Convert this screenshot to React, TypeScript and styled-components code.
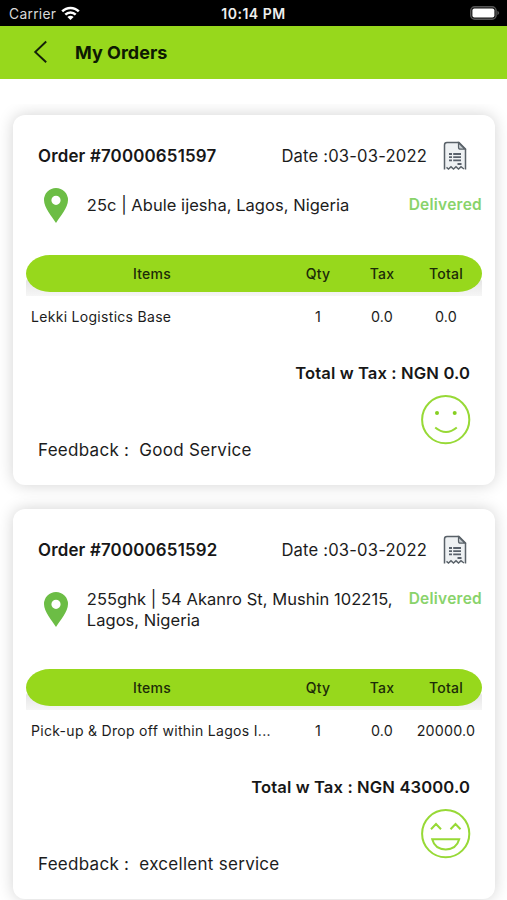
import React from "react";
import styled, { createGlobalStyle } from "styled-components";

const GlobalStyle = createGlobalStyle`
  * { box-sizing: border-box; }
  body {
    margin: 0;
    background: #fff;
    color: #1c1c1c;
    font-family: Inter, "Liberation Sans", sans-serif;
  }
`;

const Screen = styled.div`
  width: 507px;
  height: 900px;
  overflow: hidden;
  display: flex;
  flex-direction: column;
`;

const StatusBar = styled.div`
  height: 26px;
  flex: none;
  padding: 1px 7px 0 9px;
  background: #000;
  color: #d8d8d8;
  display: grid;
  grid-template-columns: 1fr auto 1fr;
  align-items: center;
  font-size: 13.8px;
  letter-spacing: 0.3px;
`;

const Carrier = styled.div`
  display: flex;
  align-items: center;
  gap: 5px;
`;

const Clock = styled.div`
  margin-right: 2px;
  color: #eee;
  font-size: 14px;
  font-weight: 600;
  letter-spacing: 0.5px;
`;

const BatterySlot = styled.div`
  display: flex;
  justify-content: flex-end;
`;

const NavBar = styled.header`
  height: 53px;
  flex: none;
  padding: 0 33px 2px;
  display: flex;
  align-items: center;
  gap: 26px;
  background: #97d81c;
`;

const Title = styled.h1`
  margin: 2px 0 0;
  color: #0d1a02;
  font-size: 18px;
  font-weight: 700;
`;

const OrderList = styled.main`
  margin-top: 25px;
  padding: 11px 12px 0 13px;
  flex: 1;
  overflow: hidden;
  display: flex;
  flex-direction: column;
  gap: 24px;
`;

const Card = styled.article`
  flex: none;
  padding: 25px 13px 29px 13px;
  border-radius: 12px;
  background: #fff;
  box-shadow: 0 0 16px rgba(0, 0, 0, 0.18);
`;

const CardHeader = styled.div`
  height: 31px;
  padding: 0 15px 0 12px;
  display: flex;
  align-items: center;
`;

const OrderNumber = styled.div`
  flex: 1;
  font-size: 16.9px;
  font-weight: 600;
  color: #171717;
  letter-spacing: 0.18px;
`;

const OrderDate = styled.div`
  margin-right: 16px;
  font-size: 16.6px;
  letter-spacing: 0.18px;
`;

const AddressRow = styled.div`
  margin-top: 16px;
  padding-left: 18px;
  display: flex;
  align-items: flex-start;
`;

const PinSlot = styled.div<{ $drop: number }>`
  width: 43px;
  height: 36px;
  padding-top: ${(p) => p.$drop}px;
`;

const Address = styled.div`
  width: 322px;
  padding-top: 8px;
  font-size: 16.5px;
  line-height: 20.5px;
  letter-spacing: 0.04px;
  white-space: pre-line;
`;

const Status = styled.div`
  padding: 8px 0 0 1px;
  color: #89d36b;
  font-size: 15.5px;
  line-height: 20px;
  font-weight: 600;
  letter-spacing: 0.25px;
`;

const TableHeadClip = styled.div<{ $gap: number }>`
  margin-top: ${(p) => p.$gap}px;
  height: 41px;
  overflow: hidden;
  background: linear-gradient(to bottom, #fff 24px, #e6e6e6 26px, #f6f6f6 41px);
`;

const Columns = styled.div`
  display: grid;
  grid-template-columns: 252px 80px 48px 80px;
  align-items: center;
  text-align: center;
  font-size: 14px;
  letter-spacing: 0.2px;
`;

const TableHead = styled(Columns)`
  height: 37px;
  border-radius: 24px / 18.5px;
  color: #1c2b08;
  background: #97d81c;
  font-weight: 500;
`;

const TableRow = styled(Columns)`
  height: 40px;
  padding-top: 1px;
  font-size: 14.3px;
`;

const ItemName = styled.div`
  padding-left: 5px;
  text-align: left;
  font-size: 14px;
  letter-spacing: 0.3px;
  white-space: nowrap;
`;

const GrandTotal = styled.div`
  margin-top: 26px;
  padding-right: 12px;
  text-align: right;
  color: #171717;
  font-size: 16.6px;
  line-height: 22px;
  font-weight: 600;
  letter-spacing: 0.12px;
`;

const FeedbackRow = styled.div`
  height: 61px;
  margin-top: 11px;
  padding: 0 11px 0 12px;
  display: flex;
  align-items: flex-start;
  justify-content: space-between;
`;

const Feedback = styled.div`
  padding-top: 44px;
  font-size: 17px;
  line-height: 22px;
  letter-spacing: 0.28px;
  white-space: pre;
`;

const WifiIcon = () => (
  <svg width="19" height="15" viewBox="0 0 19 15">
    <g fill="none" stroke="#fff" strokeWidth="2.5">
      <path d="M1.2 5.4C5.8.7 13.2.7 17.8 5.4" />
      <path d="M4.3 8.7C7.2 5.8 11.8 5.8 14.7 8.7" />
    </g>
    <path d="M6.4 10.9Q9.5 8.4 12.6 10.9L9.5 14Z" fill="#fff" />
  </svg>
);

const BatteryIcon = () => (
  <svg width="30" height="15" viewBox="0 0 30 15">
    <rect x="0.7" y="0.7" width="25.4" height="12.6" rx="4" fill="#111" stroke="#555" strokeWidth="1.4" />
    <rect x="2.4" y="2.4" width="22" height="9.2" rx="2" fill="#fff" />
    <path d="M27.4 4.8Q31 7 27.4 9.2Z" fill="#555" />
  </svg>
);

const BackIcon = () => (
  <svg width="16" height="24" viewBox="0 0 16 24">
    <path d="M13.2 1.5 2.2 12 13.2 22.3" fill="none" stroke="#14210a" strokeWidth="1.9" />
  </svg>
);

const ReceiptIcon = () => (
  <svg width="24" height="30" viewBox="0 0 24 30">
    <path
      d="M1.5 28V4Q1.5 1.5 4 1.5H16L22.5 8V28L20.5 26 18 28.2 15.5 26 13 28.2 10.5 26 8 28.2 5.5 26Z"
      fill="#eef1f3"
    />
    <path
      d="M1.5 28.6V4Q1.5 1.5 4 1.5H16L22.5 8V28.6M3.5 26.4 5.5 28 8 25.7 10.5 28 13 25.7 15.5 28 18 25.7 21 28"
      fill="none"
      stroke="#596168"
      strokeWidth="1.5"
    />
    <path d="M15.5 1.8V6.2Q15.5 8.2 17.5 8.2H22Z" fill="#c7cdd1" stroke="#596168" strokeWidth="1.2" />
    <path
      d="M6 13H9M10.2 13H18M6 16.2H9M10.2 16.2H18M6 19.4H9M10.2 19.4H18M14.5 23H18.5"
      stroke="#59616b"
      strokeWidth="1.8"
    />
  </svg>
);

const PinIcon = () => (
  <svg width="24" height="35" viewBox="0 0 24 35">
    <path
      fillRule="evenodd"
      d="M12 0A12 12 0 0 1 24 12C24 20 16 28.5 12 35 8 28.5 0 20 0 12A12 12 0 0 1 12 0ZM12 7.7A4.6 4.6 0 1 0 12 16.9 4.6 4.6 0 0 0 12 7.7Z"
      fill="#6cbd45"
    />
  </svg>
);

const SmileIcon = () => (
  <svg width="50" height="50" viewBox="0 0 50 50">
    <circle cx="24.7" cy="24.7" r="23.6" fill="none" stroke="#97d936" strokeWidth="2" />
    <circle cx="16" cy="18" r="2" fill="#86cf22" />
    <circle cx="33.7" cy="18" r="2" fill="#86cf22" />
    <path d="M14.2 32.5Q25 41.5 35.8 32.5" fill="none" stroke="#97d936" strokeWidth="2" />
  </svg>
);

const LaughIcon = () => (
  <svg width="50" height="50" viewBox="0 0 50 50">
    <g fill="none" stroke="#97d936" strokeWidth="2">
      <circle cx="24.7" cy="24.7" r="23.6" />
      <path d="M10 20.3 15 15 20 20.3M29.5 20.3 34.5 15 39.5 20.3" />
      <path d="M11.2 30.3H38.2C36.5 36.6 31.5 40.4 24.7 40.4S12.9 36.6 11.2 30.3Z" />
    </g>
  </svg>
);

interface Order {
  id: string;
  date: string;
  address: string;
  pinDrop: number;
  tableGap: number;
  item: string;
  total: string;
  grandTotal: string;
  feedback: string;
  mood: "smile" | "laugh";
}

const orders: Order[] = [
  {
    id: "70000651597",
    date: "03-03-2022",
    address: "25c | Abule ijesha, Lagos, Nigeria",
    pinDrop: 1,
    tableGap: 32,
    item: "Lekki Logistics Base",
    total: "0.0",
    grandTotal: "0.0",
    feedback: "Good Service",
    mood: "smile",
  },
  {
    id: "70000651592",
    date: "03-03-2022",
    address: "255ghk | 54 Akanro St, Mushin 102215,\nLagos, Nigeria",
    pinDrop: 11,
    tableGap: 39,
    item: "Pick-up & Drop off within Lagos I...",
    total: "20000.0",
    grandTotal: "43000.0",
    feedback: "excellent service",
    mood: "laugh",
  },
];

const OrderCard = ({ order }: { order: Order }) => (
  <Card>
    <CardHeader>
      <OrderNumber>Order #{order.id}</OrderNumber>
      <OrderDate>Date :{order.date}</OrderDate>
      <ReceiptIcon />
    </CardHeader>
    <AddressRow>
      <PinSlot $drop={order.pinDrop}>
        <PinIcon />
      </PinSlot>
      <Address>{order.address}</Address>
      <Status>Delivered</Status>
    </AddressRow>
    <TableHeadClip $gap={order.tableGap}>
      <TableHead>
        <div>Items</div>
        <div>Qty</div>
        <div>Tax</div>
        <div>Total</div>
      </TableHead>
    </TableHeadClip>
    <TableRow>
      <ItemName>{order.item}</ItemName>
      <div>1</div>
      <div>0.0</div>
      <div>{order.total}</div>
    </TableRow>
    <GrandTotal>Total w Tax : NGN {order.grandTotal}</GrandTotal>
    <FeedbackRow>
      <Feedback>{`Feedback :  ${order.feedback}`}</Feedback>
      {order.mood === "smile" ? <SmileIcon /> : <LaughIcon />}
    </FeedbackRow>
  </Card>
);

export default function App() {
  return (
    <>
      <GlobalStyle />
      <Screen>
        <StatusBar>
          <Carrier>
            Carrier
            <WifiIcon />
          </Carrier>
          <Clock>10:14 PM</Clock>
          <BatterySlot>
            <BatteryIcon />
          </BatterySlot>
        </StatusBar>
        <NavBar>
          <BackIcon />
          <Title>My Orders</Title>
        </NavBar>
        <OrderList>
          {orders.map((order) => (
            <OrderCard key={order.id} order={order} />
          ))}
        </OrderList>
      </Screen>
    </>
  );
}
